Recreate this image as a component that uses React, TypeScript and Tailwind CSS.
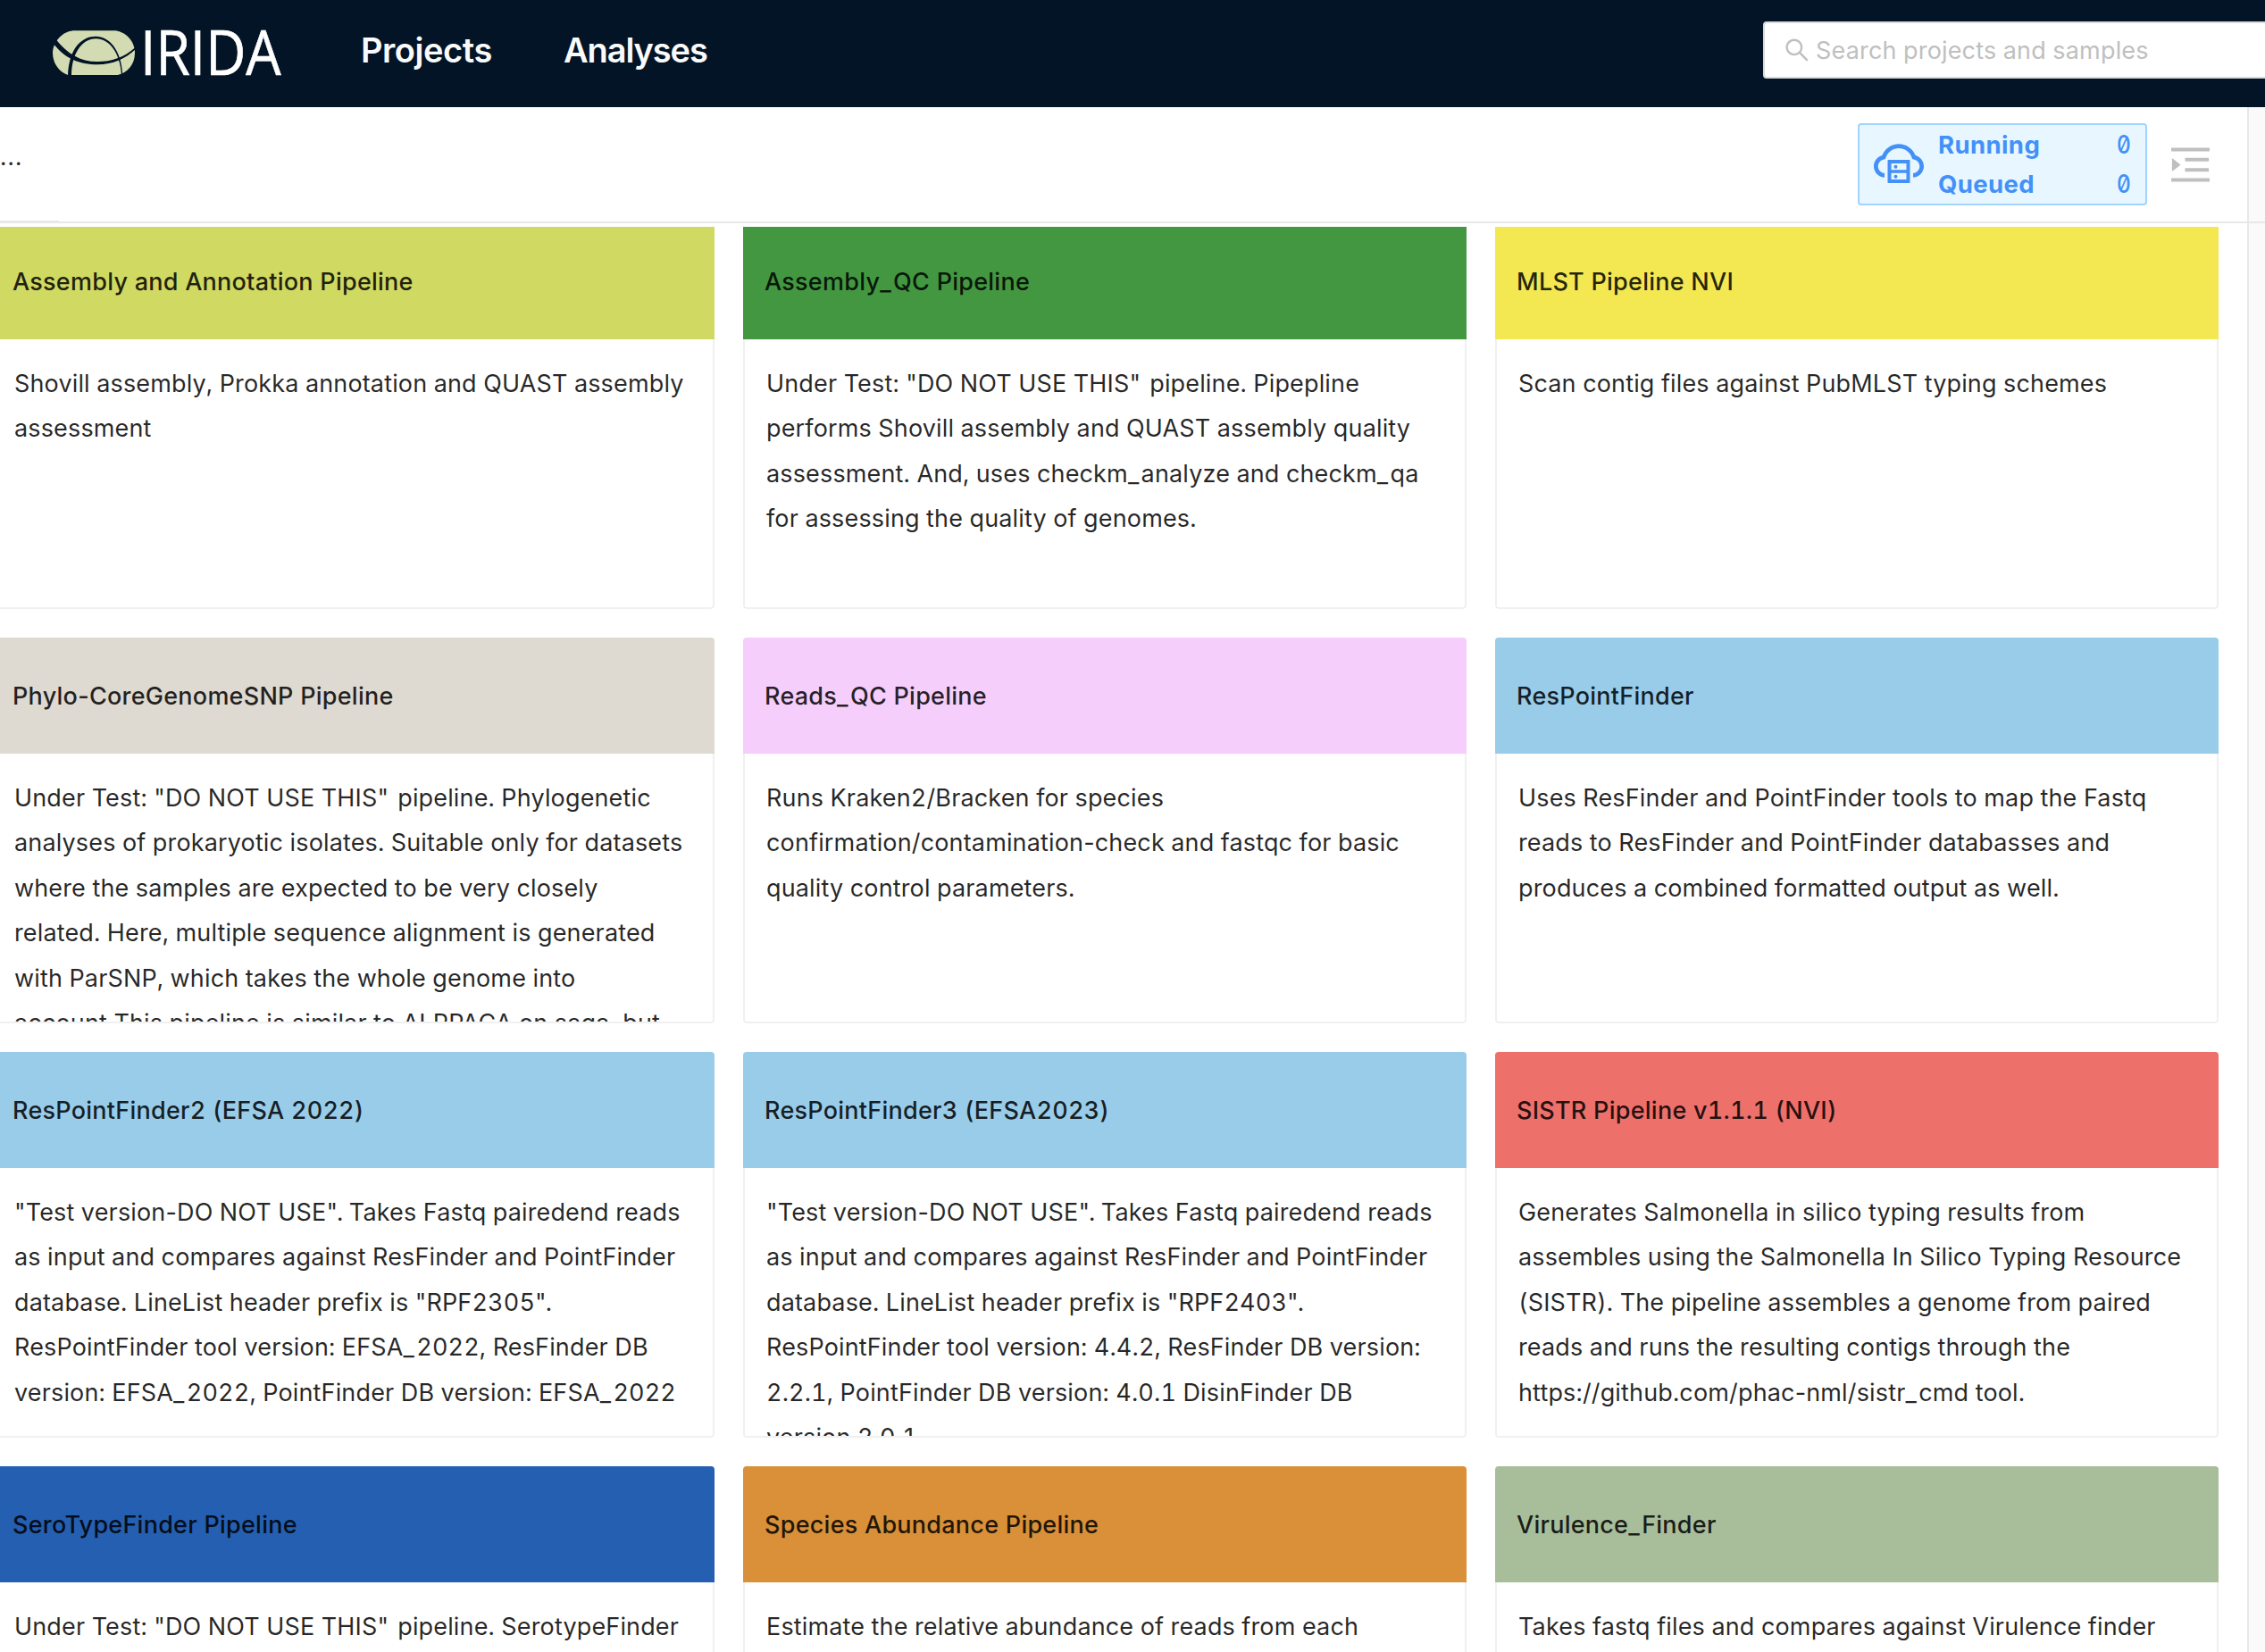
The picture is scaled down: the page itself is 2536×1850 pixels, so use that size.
import React from "react";
import { AiOutlineSearch, AiOutlineCloudServer, AiOutlineMenuUnfold } from "react-icons/ai";

type Pipeline = { title: string; color: string; text: string };

const pipelines: Pipeline[] = [
  {
    title: "Assembly and Annotation Pipeline",
    color: "bg-[#d0d962]",
    text: "Shovill assembly, Prokka annotation and QUAST assembly\nassessment",
  },
  {
    title: "Assembly_QC Pipeline",
    color: "bg-[#439741]",
    text: 'Under Test: "DO NOT USE THIS" pipeline. Pipepline\nperforms Shovill assembly and QUAST assembly quality\nassessment. And, uses checkm_analyze and checkm_qa\nfor assessing the quality of genomes.',
  },
  {
    title: "MLST Pipeline NVI",
    color: "bg-[#f3e852]",
    text: "Scan contig files against PubMLST typing schemes",
  },
  {
    title: "Phylo-CoreGenomeSNP Pipeline",
    color: "bg-[#ded9d1]",
    text: 'Under Test: "DO NOT USE THIS" pipeline. Phylogenetic\nanalyses of prokaryotic isolates. Suitable only for datasets\nwhere the samples are expected to be very closely\nrelated. Here, multiple sequence alignment is generated\nwith ParSNP, which takes the whole genome into\naccount.This pipeline is similar to ALPPACA on saga, but',
  },
  {
    title: "Reads_QC Pipeline",
    color: "bg-[#f5cefb]",
    text: "Runs Kraken2/Bracken for species\nconfirmation/contamination-check and fastqc for basic\nquality control parameters.",
  },
  {
    title: "ResPointFinder",
    color: "bg-[#98cce9]",
    text: "Uses ResFinder and PointFinder tools to map the Fastq\nreads to ResFinder and PointFinder databasses and\nproduces a combined formatted output as well.",
  },
  {
    title: "ResPointFinder2 (EFSA 2022)",
    color: "bg-[#98cce9]",
    text: '"Test version-DO NOT USE". Takes Fastq pairedend reads\nas input and compares against ResFinder and PointFinder\ndatabase. LineList header prefix is "RPF2305".\nResPointFinder tool version: EFSA_2022, ResFinder DB\nversion: EFSA_2022, PointFinder DB version: EFSA_2022',
  },
  {
    title: "ResPointFinder3 (EFSA2023)",
    color: "bg-[#98cce9]",
    text: '"Test version-DO NOT USE". Takes Fastq pairedend reads\nas input and compares against ResFinder and PointFinder\ndatabase. LineList header prefix is "RPF2403".\nResPointFinder tool version: 4.4.2, ResFinder DB version:\n2.2.1, PointFinder DB version: 4.0.1 DisinFinder DB\nversion 2.0.1',
  },
  {
    title: "SISTR Pipeline v1.1.1 (NVI)",
    color: "bg-[#ed706b]",
    text: "Generates Salmonella in silico typing results from\nassembles using the Salmonella In Silico Typing Resource\n(SISTR). The pipeline assembles a genome from paired\nreads and runs the resulting contigs through the\nhttps://github.com/phac-nml/sistr_cmd tool.",
  },
  {
    title: "SeroTypeFinder Pipeline",
    color: "bg-[#255fb1]",
    text: 'Under Test: "DO NOT USE THIS" pipeline. SerotypeFinder',
  },
  {
    title: "Species Abundance Pipeline",
    color: "bg-[#d99038]",
    text: "Estimate the relative abundance of reads from each",
  },
  {
    title: "Virulence_Finder",
    color: "bg-[#a8be9b]",
    text: "Takes fastq files and compares against Virulence finder",
  },
];

const punctuation: Record<string, string> = {
  "-": "proportional-nums",
  _: "tracking-[2.4px]",
  '" ': "tracking-[1.5px]",
  '".': "tracking-[-0.9px]",
};

function Spaced({ text }: { text: string }) {
  return (
    <div>
      {text.split(/([-_]|" |"\.)/).map((part, i) =>
        punctuation[part] ? (
          <span key={i} className={punctuation[part]}>
            {part}
          </span>
        ) : (
          part
        ),
      )}
    </div>
  );
}

function Logo() {
  return (
    <svg viewBox="0 0 870 240" className="h-[80px] w-[290px] shrink-0">
      <path
        fill="#d2dbb1"
        d="M125 43H268C310 50 333 85 333 118C333 155 310 185 275 192H108C75 180 57 150 57 118C57 85 85 48 125 43Z"
      />
      <path
        fill="#021426"
        d="M108 193C112 100 155 62 202 62C245 62 288 105 292 193L288 193C284 115 245 70 202 70C165 70 122 105 120 193Z"
      />
      <path
        fill="#021426"
        d="M58 84C95 137 150 157 207 157C260 157 300 138 335 106L335 99C295 134 255 147 207 147C150 147 105 120 67 71Z"
      />
      <text
        x="351"
        y="193"
        fill="#ffffff"
        stroke="#ffffff"
        strokeWidth="2"
        fontFamily="Open Sans, sans-serif"
        fontSize="209"
        textLength="473"
        lengthAdjust="spacingAndGlyphs"
      >
        IRIDA
      </text>
    </svg>
  );
}

function Header() {
  return (
    <header className="flex h-[120px] shrink-0 items-start bg-[#021426] pl-[40px] pt-[20px]">
      <Logo />
      <nav className="ml-[74px] flex h-[73px] items-center text-[38px] font-semibold text-[#fafafa]">
        <a className="w-[227px] tracking-[-0.45px]">Projects</a>
        <a className="tracking-[-1.1px]">Analyses</a>
      </nav>
      <div className="-mr-[40px] ml-auto mt-[4px] flex h-[64px] w-[602px] shrink-0 items-center rounded-[4px] border-2 border-[#d9d9d9] bg-white pl-[20px] text-[#bfbfbf]">
        <AiOutlineSearch size={32} />
        <span className="ml-[5px] pt-[2px] text-[27px] tracking-[0.17px]">Search projects and samples</span>
      </div>
    </header>
  );
}

function JobCounts() {
  return (
    <div className="flex h-[92px] w-[324px] items-center rounded-[4px] border-2 border-[#a0d4fc] bg-[#e8f7ff] pl-[12px] pr-[16px] text-[#4391f8]">
      <AiOutlineCloudServer size={64} className="mt-[-2px] shrink-0" />
      <div className="ml-[12px] flex-1 text-[27.5px] font-bold leading-[44px] tracking-[0.4px]">
        {["Running", "Queued"].map((label) => (
          <div key={label} className="flex justify-between">
            <span>{label}</span>
            <span className="origin-right scale-x-[0.84] text-[29px] font-medium slashed-zero">0</span>
          </div>
        ))}
      </div>
    </div>
  );
}

function PipelineCard({ title, color, text }: Pipeline) {
  return (
    <article className="flex h-[432px] flex-col overflow-hidden rounded-[4px]">
      <h2
        className={`${color} flex h-[130px] shrink-0 items-center pl-[24px] pt-[2px] text-[27px] font-medium tracking-[0.25px] text-black/85`}
      >
        <Spaced text={title} />
      </h2>
      <div className="h-[302px] overflow-hidden whitespace-pre rounded-b-[4px] border-x-2 border-b-2 border-[#f0f0f0] bg-white px-[24px] pt-[25px] text-[27px] leading-[50.4px] tracking-[0.15px] text-black/85">
        {text.split("\n").map((line) => (
          <Spaced key={line} text={line} />
        ))}
      </div>
    </article>
  );
}

export default function App() {
  return (
    <div className="flex h-[1850px] w-[2536px] flex-col overflow-hidden bg-white font-['Inter',sans-serif] tabular-nums">
      <Header />
      <div className="flex min-h-0 flex-1">
        <main className="flex w-[2516px] flex-col">
          <div className="flex h-[128px] shrink-0 items-center">
            <span className="-mt-[15px] text-[27px] tracking-[1.2px] text-black/85">...</span>
            <div className="ml-auto">
              <JobCounts />
            </div>
            <AiOutlineMenuUnfold size={55} className="ml-[21px] mr-[36px] text-[#bfbfbf]" />
          </div>
          <div className="relative h-[2px] shrink-0 bg-[#e8e8e8]">
            <div className="absolute -top-px left-0 h-px w-[66px] bg-[#e8e8e8]" />
          </div>
          <div className="mt-[4px] min-h-0 flex-1 overflow-hidden">
            <div className="-ml-[10px] -mt-[4px] grid w-[2494px] grid-cols-3 gap-[32px]">
              {pipelines.map((p) => (
                <PipelineCard key={p.title} {...p} />
              ))}
            </div>
          </div>
        </main>
        <aside className="flex flex-1 flex-col border-l-2 border-[#e8e8e8] bg-[#fafafa]">
          <div className="mt-[128px] h-[2px] bg-[#e8e8e8]" />
        </aside>
      </div>
    </div>
  );
}
